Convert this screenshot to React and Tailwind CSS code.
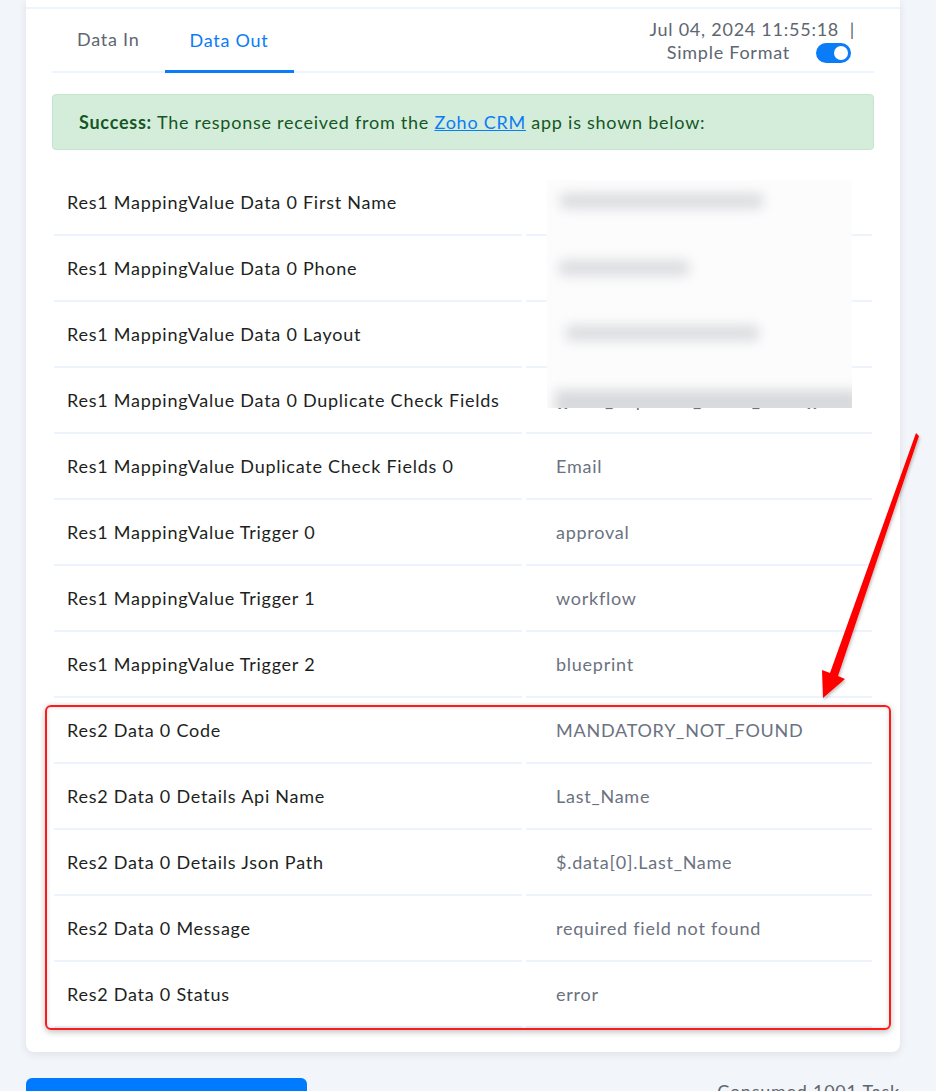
import React from "react";

const rows = [
  ["Res1 MappingValue Data 0 First Name", ""],
  ["Res1 MappingValue Data 0 Phone", ""],
  ["Res1 MappingValue Data 0 Layout", ""],
  ["Res1 MappingValue Data 0 Duplicate Check Fields", "{{data_duplicate_check_fields}}"],
  ["Res1 MappingValue Duplicate Check Fields 0", "Email"],
  ["Res1 MappingValue Trigger 0", "approval"],
  ["Res1 MappingValue Trigger 1", "workflow"],
  ["Res1 MappingValue Trigger 2", "blueprint"],
  ["Res2 Data 0 Code", "MANDATORY_NOT_FOUND"],
  ["Res2 Data 0 Details Api Name", "Last_Name"],
  ["Res2 Data 0 Details Json Path", "$.data[0].Last_Name"],
  ["Res2 Data 0 Message", "required field not found"],
  ["Res2 Data 0 Status", "error"],
];

function Row({ label, value }) {
  return (
    <div className="flex gap-[4px]">
      <div className="w-[468px] h-[66px] flex items-center pl-[13px] border-b-2 border-[#edf4fd] text-[18px] text-[#1d1f22] whitespace-nowrap">
        {label}
      </div>
      <div className="w-[346px] h-[66px] flex items-center pl-[30px] border-b-2 border-[#edf4fd] text-[18px] text-[#6b7280] whitespace-nowrap overflow-hidden">
        {value}
      </div>
    </div>
  );
}

export default function App() {
  return (
    <div className="relative min-h-[1091px] h-[1091px] overflow-hidden bg-[#f2f5f9] font-['Lato',sans-serif] tracking-[0.75px]">
      {/* response card */}
      <div className="ml-[26px] w-[874px] bg-white rounded-b-[8px] shadow-[0_2px_8px_rgba(0,0,0,0.09)] pt-[7px] pb-[24px]">
        <div className="border-t-2 border-[#edf4fd] px-[26px]">
          {/* tabs */}
          <div className="flex items-end justify-between border-b-2 border-[#edf4fd] h-[64px]">
            <div className="flex h-full">
              <div className="px-[25px] flex items-center text-[18px] text-[#5e6670] pb-[1px]">Data In</div>
              <div className="px-[25px] flex items-center text-[18px] text-[#0a7cf7] border-b-[3px] border-[#0a7cf7] mb-[-2px] pt-[1px]">
                Data Out
              </div>
            </div>
            <div className="self-start pt-[9px] pr-[19px] flex flex-col items-end text-[18px] text-[#5e6670] leading-[23px]">
              <div className="whitespace-pre">Jul 04, 2024 11:55:18  |</div>
              <div className="flex items-center">
                <span>Simple Format</span>
                <span className="ml-[26px] mr-[4px] w-[35px] h-[20px] rounded-full bg-[#0a7cf7] flex items-center justify-end pr-[3px]">
                  <span className="w-[14px] h-[14px] rounded-full bg-white"></span>
                </span>
              </div>
            </div>
          </div>

          {/* alert */}
          <div className="mt-[21px] h-[56px] flex items-center px-[26px] rounded-[4px] bg-[#d4edda] border border-[#c3e6cb] text-[18px] text-[#155724] whitespace-nowrap">
            <span className="font-bold mr-[5px]">Success:</span>
            <span>
              The response received from the{" "}
              <span className="text-[#0a7cf7] underline">Zoho CRM</span> app is shown below:
            </span>
          </div>

          {/* mapped values */}
          <div className="mt-[20px] px-[2px]">
            {rows.map(([l, v]) => (
              <Row key={l} label={l} value={v} />
            ))}
          </div>
        </div>
      </div>

      {/* footer */}
      <div className="flex items-start justify-between ml-[26px] w-[874px] mt-[26px]">
        <div className="w-[281px] h-[40px] bg-[#007bff] rounded-[6px]"></div>
        <div className="text-[18px] text-[#5e6670] whitespace-nowrap">Consumed 1001 Task</div>
      </div>

      {/* redacted values */}
      <div className="absolute left-[547px] top-[180px] w-[305px] h-[228px] bg-[#fcfcfd] overflow-hidden">
        <div className="absolute left-[12px] top-[13px] w-[205px] h-[16px] bg-[#dcdde0] rounded-full blur-[6px]"></div>
        <div className="absolute left-[11px] top-[80px] w-[132px] h-[16px] bg-[#dcdde0] rounded-full blur-[6px]"></div>
        <div className="absolute left-[18px] top-[145px] w-[195px] h-[16px] bg-[#dcdde0] rounded-full blur-[6px]"></div>
        <div className="absolute left-[8px] top-[210px] w-[305px] h-[26px] bg-[#d8d9dc] blur-[6px]"></div>
      </div>

      {/* highlight box */}
      <div className="absolute left-[45px] top-[705px] w-[846px] h-[325px] border-2 border-[#ff1a1a] rounded-[6px] shadow-[0_2px_6px_rgba(0,0,0,0.25),inset_0_0_4px_rgba(0,0,0,0.15)]"></div>

      {/* arrow */}
      <svg className="absolute left-0 top-0" width="936" height="1091" viewBox="0 0 936 1091">
        <defs>
          <filter id="arrowShadow" x="-20%" y="-20%" width="140%" height="140%">
            <feDropShadow dx="1" dy="2" stdDeviation="1.5" floodColor="#000" floodOpacity="0.25" />
          </filter>
        </defs>
        <polygon
          points="916,433 919,436 838,676 845,679 823,698 822,670 830,673"
          fill="#ff0000"
          filter="url(#arrowShadow)"
        />
      </svg>
    </div>
  );
}
